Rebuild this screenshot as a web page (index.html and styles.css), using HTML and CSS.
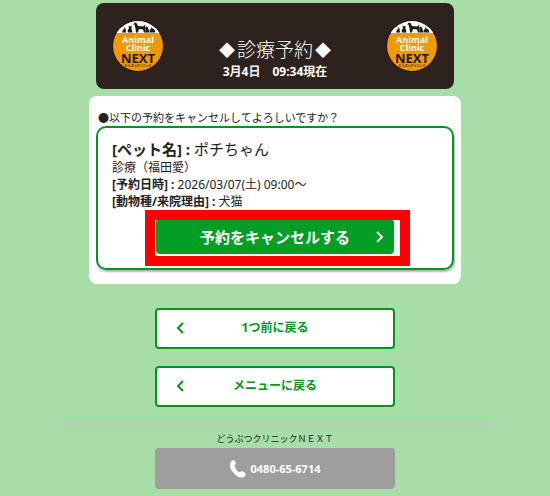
FILE: index.html
```
<!DOCTYPE html>
<html lang="ja">
    <head>
        <meta charset="utf-8">
        <meta name="viewport" content="width=device-width, initial-scale=1">
        <title>診療予約</title>
        <link rel="stylesheet" href="styles.css">
    </head>
    <body>
        <svg class="defs" aria-hidden="true">
            <defs>
                <clipPath id="disc"><circle cx="26" cy="26" r="25"/></clipPath>
                <symbol id="logo" viewBox="0 0 52 52">
                    <circle cx="26" cy="26" r="26" fill="#1b1820"/>
                    <g clip-path="url(#disc)">
                        <rect width="52" height="52" fill="#f39800"/>
                        <rect width="52" height="13" fill="#fff"/>
                        <!-- rabbit, cat, dog, bird, hamster -->
                        <g fill="#1d1916">
                            <path d="M10 12.500l1-3 1.500-.5-1-2.500 2 2 .5 4z"/>
                            <path d="M16 12.500c-1-2 0-3 1-4l-.5-3 1.500 1 1.500-1v3l1 4z"/>
                            <path d="M21 4.500l2-2 1.500.5 1.500 3 5 .5 2.500-2-.5 3 1 5h-2l-1-3-4-.5-1 3.500h-2l-.5-4-1-4z"/>
                            <path d="M34 12.500l-.5-4-.5-1 1.500-1 1.500 1 1.500 5z"/>
                            <path d="M38 12.500c-1-2 0-3 1-3.500l.5-2 1 1.500 2 1 1 3z"/>
                        </g>
                        <text class="logo-en" x="26" y="23">Animal</text>
                        <text class="logo-en" x="26" y="31">Clinic</text>
                        <text class="logo-next" x="26" y="43">NEXT</text>
                        <text class="logo-ja" x="26" y="47">どうぶつクリニック</text>
                    </g>
                </symbol>
            </defs>
        </svg>
        <main class="page">
            <header class="header">
                <svg class="logo" role="img" aria-label="Animal Clinic NEXT"><use href="#logo"/></svg>
                <div class="header-text">
                    <h1 class="title"><span class="diamond">◆</span>診療予約<span class="diamond">◆</span></h1>
                    <p class="now">3月4日　09:34現在</p>
                </div>
                <svg class="logo" role="img" aria-label="Animal Clinic NEXT"><use href="#logo"/></svg>
            </header>
            <section class="card">
                <p class="question">●以下の予約をキャンセルしてよろしいですか？</p>
                <div class="reservation">
                    <p class="pet"><b>[ペット名] : </b>ポチちゃん</p>
                    <p>診療（福田愛）</p>
                    <p><b>[予約日時] : </b>2026/03/07(土) 09:00～</p>
                    <p><b>[動物種/来院理由] : </b>犬猫</p>
                    <div class="highlight">
                        <button type="button" class="button cancel">
                            予約をキャンセルする
                            <svg class="arrow right" viewBox="0 0 8 12"><path d="M1 1l5 5-5 5"/></svg>
                        </button>
                    </div>
                </div>
            </section>
            <nav class="links">
                <a href="#" class="button back">
                    <svg class="arrow left" viewBox="0 0 8 12"><path d="M7 1L2 6l5 5"/></svg>
                    1つ前に戻る
                </a>
                <a href="#" class="button back">
                    <svg class="arrow left" viewBox="0 0 8 12"><path d="M7 1L2 6l5 5"/></svg>
                    メニューに戻る
                </a>
            </nav>
        </main>
        <footer class="footer">
            <p class="clinic">どうぶつクリニックＮＥＸＴ</p>
            <a href="tel:0480656714" class="button tel">
                <svg class="phone" viewBox="0 0 16 18"><path d="M1 2C2 0 4 0 5 1c1 2 1 3 0 4-1 1 0 2 1 4 1 2 3 4 4 3 1-1 2-1 4 0 2 1 2 3 1 4-2 2-5 2-8 0C3 13 0 9 0 5c0-1 0-2 1-3z"/></svg>
                0480-65-6714
            </a>
        </footer>
    </body>
</html>
```
FILE: styles.css
```
* {
    margin: 0;
    padding: 0;
    box-sizing: border-box;
}
:root {
    --bg-color: #a7dea7;
    --fg-color: #222;
    --green: #00961e;
    --brown: #2d221e;
}
body {
    padding: 3px 10px 7px;
    background-color: var(--bg-color);
    color: var(--fg-color);
    font-family: "Noto Sans", "Noto Sans CJK JP", sans-serif;
    font-size: 12px;
    line-height: 17px;
}
.defs {
    position: absolute;
    width: 0;
    height: 0;
}
.page {
    max-width: 372px;
    margin: 0 auto;
}
.header {
    display: flex;
    justify-content: space-between;
    align-items: flex-start;
    margin: 0 7px 7px;
    padding: 17px 16px 8px;
    border-radius: 8px;
    background-color: var(--brown);
    color: #fff;
    text-align: center;
}
.header-text {
    padding-top: 15px;
}
.logo {
    width: 52px;
    height: 52px;
}
.logo-en {
    fill: #fff;
    font: bold 9px "Open Sans", sans-serif;
    text-anchor: middle;
}
.logo-next {
    fill: #1d1916;
    font: bold 13px "Open Sans", sans-serif;
    text-anchor: middle;
}
.logo-ja {
    fill: #1d1916;
    font: bold 3px "Noto Sans CJK JP", sans-serif;
    text-anchor: middle;
}
.title {
    display: flex;
    justify-content: center;
    gap: 2px;
    font-family: "Noto Sans CJK JP", sans-serif;
    font-size: 19px;
    font-weight: 300;
    line-height: 28px;
}
.diamond {
    font-size: 16px;
}
.now {
    font-weight: bold;
    line-height: 18px;
}
.card {
    padding: 14px 7px;
    border-radius: 8px;
    background-color: #fff;
}
.question {
    padding-left: 2px;
    font-size: 11px;
    line-height: 16px;
}
.reservation {
    padding: 11px 14px 14px;
    border: 2px solid var(--green);
    border-radius: 10px;
    box-shadow: 1px 2px 2px rgba(0, 0, 0, .3);
}
.pet {
    font-size: 15px;
    line-height: 20px;
}
.button {
    display: flex;
    position: relative;
    justify-content: center;
    align-items: center;
    width: 100%;
    max-width: 240px;
    border-radius: 4px;
    font-family: inherit;
    font-weight: bold;
    text-decoration: none;
    cursor: pointer;
}
.highlight {
    position: relative;
    max-width: 238px;
    margin: 9px auto 0;
}
/* red frame round the cancel button */
.highlight::after {
    position: absolute;
    inset: -9px -16px -12px -11px;
    border: 10px solid #f00;
    content: "";
    pointer-events: none;
}
.cancel {
    height: 35px;
    border: 0;
    background-color: #029e26;
    color: #fff;
    font-size: 15px;
}
.arrow {
    position: absolute;
    width: 8px;
    height: 12px;
    fill: none;
    stroke: currentColor;
    stroke-width: 2;
}
.right {
    right: 10px;
}
.left {
    left: 19px;
}
.links {
    display: grid;
    gap: 17px;
    justify-items: center;
    margin: 24px 0 16px;
}
.back {
    height: 41px;
    border: 2px solid var(--green);
    background-color: #fff;
    color: var(--green);
    padding-bottom: 2px;
}
.footer {
    max-width: 436px;
    margin: 0 auto;
    padding-top: 6px;
    border-top: 2px solid #bcc6bc;
}
.clinic {
    font-size: 9px;
    line-height: 16px;
    text-align: center;
}
.tel {
    gap: 5px;
    height: 41px;
    margin: 1px auto 0;
    background-color: #9e9e9e;
    color: #fff;
    font-size: 11px;
}
.phone {
    width: 16px;
    height: 18px;
    fill: #fff;
}
```
